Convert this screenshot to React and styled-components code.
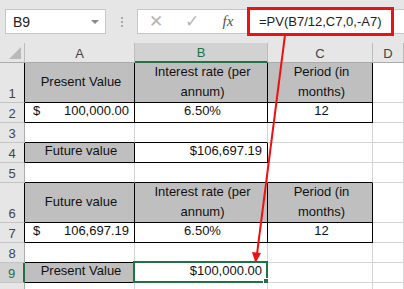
import styled, { createGlobalStyle } from "styled-components";

const GlobalStyle = createGlobalStyle`
  html, body {
    margin: 0;
    padding: 0;
    background: #fff;
  }
  body {
    font-family: "Liberation Sans", Arial, sans-serif;
    overflow: hidden;
  }
`;

// styles
const Page = styled.div`
  position: relative;
  width: 404px;
  height: 289px;
  overflow: hidden;
`;

const Toolbar = styled.div`
  height: 43px;
  background: #e6e6e6;
  display: flex;
  align-items: center;
  padding-left: 5px;
  box-sizing: border-box;
`;

const NameBox = styled.div`
  width: 101px;
  height: 25px;
  box-sizing: border-box;
  background: #fff;
  border: 1px solid #c6c6c6;
  display: flex;
  align-items: center;
  justify-content: space-between;
  padding: 0 6px 0 7px;
  font-size: 14px;
  color: #222;
`;

const DropArrow = styled.span`
  width: 0;
  height: 0;
  border-left: 4px solid transparent;
  border-right: 4px solid transparent;
  border-top: 4px solid #888;
`;

const Grip = styled.div`
  width: 31px;
  display: flex;
  flex-direction: column;
  align-items: center;
  gap: 2px;
  span {
    width: 2px;
    height: 2px;
    background: #aaa;
  }
`;

const FormulaBar = styled.div`
  height: 25px;
  flex: 1;
  box-sizing: border-box;
  background: #fff;
  border: 1px solid #c6c6c6;
  border-right: none;
  display: flex;
  align-items: center;
`;

const BarIcon = styled.span`
  width: 36px;
  display: flex;
  justify-content: center;
  align-items: center;
  color: ${(p) => p.color || "#b5b5b5"};
  font-size: ${(p) => p.size || "16px"};
  font-family: ${(p) => (p.serif ? '"Liberation Serif", serif' : "inherit")};
  font-style: ${(p) => (p.serif ? "italic" : "normal")};
`;

const FormulaText = styled.div`
  margin-left: 1px;
  width: 147px;
  height: 29px;
  box-sizing: border-box;
  border: 3px solid #ee1111;
  display: flex;
  align-items: center;
  padding-left: 9px;
  font-size: 13px;
  color: #222;
  white-space: nowrap;
`;

const Sheet = styled.div`
  display: grid;
  grid-template-columns: 25px 110px 133px 105px 1fr;
  grid-template-rows: 20px 40px 20px 20px 20px 20px 40px 20px 20px 20px 20px;
  font-size: 13px;
  color: #111;
`;

const ColHead = styled.div`
  background: ${(p) => (p.sel ? "#d2d2d2" : "#e6e6e6")};
  border-right: 1px solid #bcbcbc;
  border-bottom: ${(p) => (p.sel ? "2px solid #217346" : "1px solid #ababab")};
  color: ${(p) => (p.sel ? "#217346" : "#444")};
  display: flex;
  align-items: center;
  justify-content: center;
  box-sizing: border-box;
  font-size: 13px;
  padding-top: 1px;
  position: relative;
`;

const Corner = styled(ColHead)`
  &::after {
    content: "";
    position: absolute;
    right: 3px;
    bottom: 3px;
    width: 0;
    height: 0;
    border-left: 12px solid transparent;
    border-bottom: 12px solid #b9b9b9;
  }
`;

const RowHead = styled.div`
  background: ${(p) => (p.sel ? "#d2d2d2" : "#e6e6e6")};
  border-bottom: 1px solid #c4c4c4;
  border-right: ${(p) =>
    p.sel ? "2px solid #217346" : p.dark ? "1px solid #000" : "1px solid #ababab"};
  color: ${(p) => (p.sel ? "#217346" : "#444")};
  box-sizing: border-box;
  display: flex;
  align-items: flex-end;
  justify-content: center;
  padding-bottom: 1px;
  font-size: 13px;
`;

const Cell = styled.div`
  position: relative;
  box-sizing: border-box;
  background: ${(p) => (p.fill ? "#bfbfbf" : "#fff")};
  border-right: 1px solid ${(p) => (p.br ? "#000" : "#d4d4d4")};
  border-bottom: 1px solid ${(p) => (p.bb ? "#000" : "#d4d4d4")};
  display: flex;
  align-items: ${(p) => (p.mid ? "center" : "flex-end")};
  justify-content: ${(p) =>
    p.align === "right" ? "flex-end" : p.align === "between" ? "space-between" : "center"};
  text-align: center;
  padding: 0 5px 1px 8px;
  line-height: 20px;
  white-space: pre-line;
`;

const Selection = styled.div`
  position: absolute;
  left: -2px;
  top: -2px;
  right: -1px;
  bottom: -1px;
  border: 2px solid #217346;
  pointer-events: none;
  &::after {
    content: "";
    position: absolute;
    right: -4px;
    bottom: -4px;
    width: 5px;
    height: 5px;
    background: #217346;
    border: 1px solid #fff;
  }
`;

const Arrow = styled.svg`
  position: absolute;
  left: 0;
  top: 0;
  pointer-events: none;
`;

// data
const rows = [
  {
    n: 1,
    cells: [
      { t: "Present Value", fill: true, br: true, bb: true, mid: true },
      { t: "Interest rate (per\nannum)", fill: true, br: true, bb: true, mid: true },
      { t: "Period (in\nmonths)", fill: true, br: true, bb: true, mid: true },
      {},
    ],
    dark: true,
  },
  {
    n: 2,
    cells: [
      { t: ["$", "100,000.00"], align: "between", br: true, bb: true },
      { t: "6.50%", br: true, bb: true },
      { t: "12", br: true, bb: true },
      {},
    ],
    dark: true,
  },
  { n: 3, cells: [{ bb: true }, { bb: true }, {}, {}] },
  {
    n: 4,
    cells: [
      { t: "Future value", fill: true, br: true, bb: true },
      { t: "$106,697.19", align: "right", br: true, bb: true },
      {},
      {},
    ],
    dark: true,
  },
  { n: 5, cells: [{ bb: true }, { bb: true }, { bb: true }, {}] },
  {
    n: 6,
    cells: [
      { t: "Future value", fill: true, br: true, bb: true, mid: true },
      { t: "Interest rate (per\nannum)", fill: true, br: true, bb: true, mid: true },
      { t: "Period (in\nmonths)", fill: true, br: true, bb: true, mid: true },
      {},
    ],
    dark: true,
  },
  {
    n: 7,
    cells: [
      { t: ["$", "106,697.19"], align: "between", br: true, bb: true },
      { t: "6.50%", br: true, bb: true },
      { t: "12", br: true, bb: true },
      {},
    ],
    dark: true,
  },
  { n: 8, cells: [{ bb: true }, { bb: true }, {}, {}] },
  {
    n: 9,
    sel: true,
    cells: [
      { t: "Present Value", fill: true, br: true, bb: true },
      { t: "$100,000.00", align: "right", br: true, bb: true, active: true },
      {},
      {},
    ],
  },
  // row 10 is only a sliver at the bottom edge, its number is out of view
  { n: 10, hideLabel: true, cells: [{}, {}, {}, {}] },
];

const App = () => {
  return (
    <Page>
      <GlobalStyle />
      <Toolbar>
        <NameBox>
          B9
          <DropArrow />
        </NameBox>
        <Grip>
          <span />
          <span />
          <span />
        </Grip>
        <FormulaBar>
          <BarIcon size="17px">✕</BarIcon>
          <BarIcon size="17px">✓</BarIcon>
          <BarIcon serif size="15px" color="#555">
            fx
          </BarIcon>
          <FormulaText>=PV(B7/12,C7,0,-A7)</FormulaText>
        </FormulaBar>
      </Toolbar>
      <Sheet>
        <Corner />
        <ColHead>A</ColHead>
        <ColHead sel>B</ColHead>
        <ColHead>C</ColHead>
        <ColHead>D</ColHead>
        {rows.map((row) => [
          <RowHead key={"h" + row.n} sel={row.sel} dark={row.dark}>
            {row.hideLabel ? null : row.n}
          </RowHead>,
          ...row.cells.map((c, i) => (
            <Cell
              key={row.n + "-" + i}
              fill={c.fill}
              br={c.br}
              bb={c.bb}
              mid={c.mid}
              align={c.align}
            >
              {Array.isArray(c.t) ? (
                <>
                  <span>{c.t[0]}</span>
                  <span>{c.t[1]}</span>
                </>
              ) : (
                c.t
              )}
              {c.active && <Selection />}
            </Cell>
          )),
        ])}
      </Sheet>
      <Arrow width="404" height="289">
        <line x1="285" y1="35" x2="257" y2="254" stroke="#ee1111" strokeWidth="2" />
        <polygon points="255.5,263 252,252 261,253" fill="#ee1111" />
      </Arrow>
    </Page>
  );
};

export default App;
